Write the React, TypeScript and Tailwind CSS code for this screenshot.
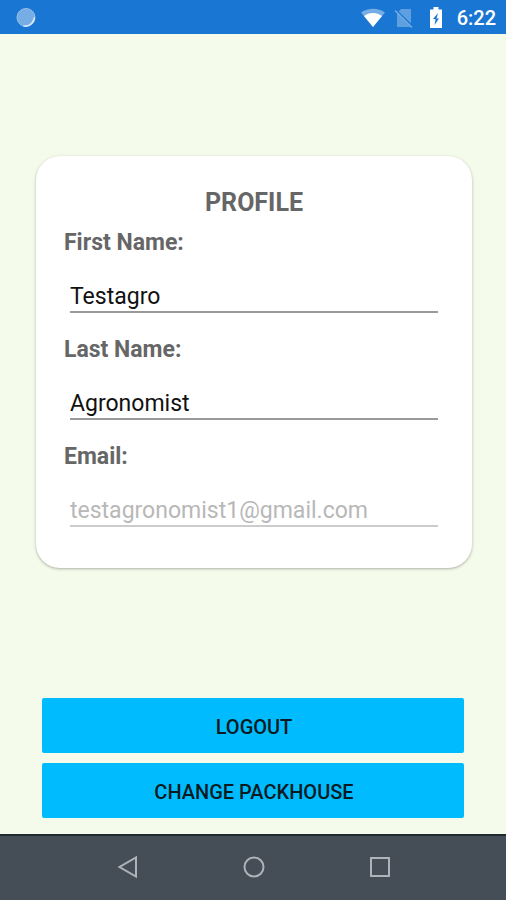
import { useState } from "react";

type FieldProps = {
	id: string;
	label: string;
	type?: string;
	value: string;
	disabled?: boolean;
	onChange?: (value: string) => void;
};

function Field({ id, label, type = "text", value, disabled, onChange }: FieldProps) {
	return (
		<div className="flex flex-col">
			<label htmlFor={id} className="text-[23px] leading-7 font-bold text-[#666666]">
				{label}
			</label>
			<input
				id={id}
				type={type}
				value={value}
				disabled={disabled}
				onChange={(e) => onChange?.(e.target.value)}
				className="mx-1.5 mt-6 h-8 border-b-2 border-[#9a9a9a] bg-transparent text-[23px] leading-7 text-[#111111] outline-none disabled:border-[#cccccc] disabled:text-[#b8b8b8]"
			/>
		</div>
	);
}

function StatusBar() {
	return (
		<header className="flex h-[34px] items-center justify-between bg-[#1976d2] pt-0.5 pr-[10px] pl-4 text-white">
			<svg className="h-5 w-5" viewBox="0 0 20 20" aria-hidden="true">
				<circle cx="10" cy="9.500" r="9" fill="#75ade4" stroke="#98c1ea" />
				<path d="M18.500 9a9 9 0 0 1-11 9c6 .3 9-3 11-9z" fill="#f1f7fd" stroke="#d6e7f8" />
			</svg>
			<div className="flex items-center">
				<svg className="h-5 w-6" viewBox="0 0 24 20" aria-hidden="true">
					<path d="M0 4.500C7 -.5 17 -.5 24 4.500L12 19z" fill="#75ade4" />
					<path d="M3 8c5-4 13-4 18 0l-9 11z" fill="#ffffff" />
				</svg>
				<svg className="ml-[9px] h-5 w-5" viewBox="0 0 20 20" aria-hidden="true">
					<path d="M7 1h10v14.500L4.500 3.500zM3 5l13.500 14H3z" fill="#5e9fdf" />
					<path d="M1 2.500L18 19.500" stroke="#75ade4" strokeWidth="1.500" />
				</svg>
				<svg className="ml-4 h-[22px] w-3" viewBox="0 0 12 22" aria-hidden="true">
					<path d="M3.500 0h5v2.500H12V21H0V2.500h3.500z" fill="#ffffff" />
					<path d="M8 6L3 12h2.500l-1 6L9 11.500H6.500z" fill="#1976d2" />
				</svg>
				<span className="ml-[15px] text-[20px] leading-6 font-medium">6:22</span>
			</div>
		</header>
	);
}

function SystemNav() {
	return (
		<nav className="flex h-[66px] items-center justify-center gap-[102px] border-t-2 border-[#1f2b2e] bg-[#454d56] pb-0.5 pl-0.5">
			<button type="button" aria-label="Back">
				<svg className="h-6 w-6" viewBox="0 0 24 24" fill="none" stroke="#adb3b8" strokeWidth="2">
					<path d="M20 2.500v19L3.500 12z" />
				</svg>
			</button>
			<button type="button" aria-label="Home">
				<svg className="h-6 w-6" viewBox="0 0 24 24" fill="none" stroke="#adb3b8" strokeWidth="2">
					<circle cx="12" cy="12" r="9.500" />
				</svg>
			</button>
			<button type="button" aria-label="Recent apps">
				<svg className="h-6 w-6" viewBox="0 0 24 24" fill="none" stroke="#adb3b8" strokeWidth="2">
					<rect x="3" y="3" width="18" height="18" />
				</svg>
			</button>
		</nav>
	);
}

export default function App() {
	const [firstName, setFirstName] = useState("Testagro");
	const [lastName, setLastName] = useState("Agronomist");

	return (
		<div className="flex min-h-screen flex-col bg-[#f4fbeb] font-[Roboto,sans-serif]">
			<StatusBar />

			<main className="flex flex-1 flex-col">
				{/* Profile card */}
				<section className="flex flex-1 flex-col justify-center pr-[34px] pl-9">
					<form className="flex flex-col rounded-3xl bg-white px-7 pt-[31px] pb-[41px] shadow-[0_1px_3px_rgba(0,0,0,0.3)]">
						<h1 className="text-center text-[25px] leading-8 font-bold text-[#666666]">PROFILE</h1>
						<div className="mt-[10px] flex flex-col gap-[23px]">
							<Field id="first-name" label="First Name:" value={firstName} onChange={setFirstName} />
							<Field id="last-name" label="Last Name:" value={lastName} onChange={setLastName} />
							<Field id="email" label="Email:" type="email" value="testagronomist1@gmail.com" disabled />
						</div>
					</form>
				</section>

				{/* Actions */}
				<div className="flex flex-col gap-[10px] px-[42px] pt-2 pb-4">
					<button
						type="button"
						className="h-[55px] rounded-xs bg-[#00bcff] pt-0.5 pl-0.5 text-[20px] leading-6 font-medium text-[#0a1a20]"
					>
						LOGOUT
					</button>
					<button
						type="button"
						className="h-[55px] rounded-xs bg-[#00bcff] pt-0.5 pl-0.5 text-[20px] leading-6 font-medium text-[#0a1a20]"
					>
						CHANGE PACKHOUSE
					</button>
				</div>
			</main>

			<SystemNav />
		</div>
	);
}
